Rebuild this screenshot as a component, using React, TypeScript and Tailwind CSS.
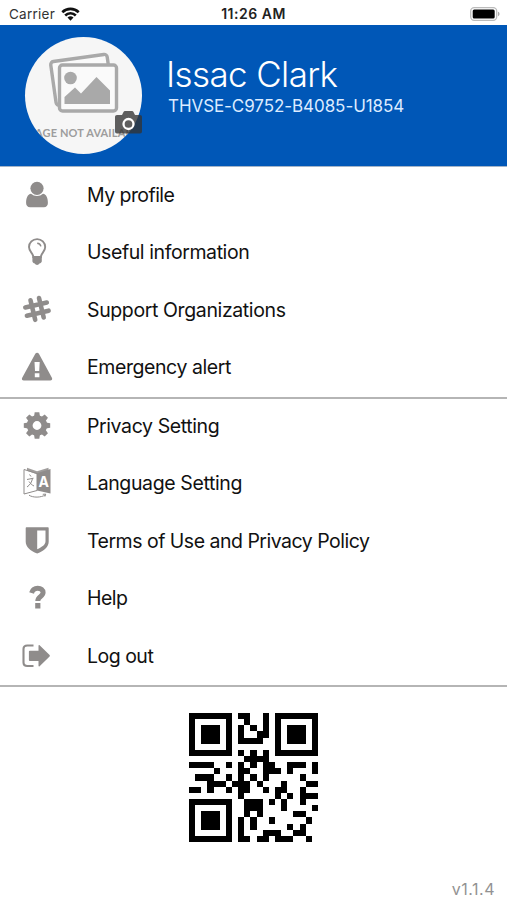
import type { ReactNode } from "react";

const QR_ROWS = [
  "#######.##..#.#######",
  "#.....#..#..#.#.....#",
  "#.###.#.#.#.#.#.###.#",
  "#.###.#.#..##.#.###.#",
  "#.###.#.####..#.###.#",
  "#.....#.......#.....#",
  "#######.#.#.#.#######",
  ".........####........",
  "####..#.#.#.##..###.#",
  "....#...##..###.#...#",
  ".###..#.#.#.#.....#..",
  "...###.###.#...#...##",
  "##.#..#.##..#.##..#..",
  "........#.....#.#.###",
  "#######..###.#.#..#..",
  "#.....#..###...#....#",
  "#.###.#..#.#.....##..",
  "#.###.#.#.#..#.....#.",
  "#.###.#.#.#.....#.#..",
  "#.....#.#...###..##..",
  "#######.##.##.###..#.",
];

function Icon({ children }: { children: ReactNode }) {
  return (
    <svg
      className="size-8 shrink-0 text-[#8f8c8b]"
      fill="currentColor"
      viewBox="0 0 32 32"
    >
      {children}
    </svg>
  );
}

const userIcon = (
  <Icon>
    <circle cx="16" cy="9.3" r="6.6" />
    <path d="M10 14.8a9 9 0 0 0 12 0c3.400.6 4.900 4 4.900 9.200 0 2.600-1.500 4.200-4 4.200H9.100c-2.500 0-4-1.600-4-4.200 0-5.200 1.500-8.600 4.900-9.200Z" />
  </Icon>
);

const bulbIcon = (
  <Icon>
    <path
      d="M12.300 21c0-3.700-4.300-5.300-4.300-10a8.100 7.900 0 0 1 16.200 0c0 4.700-4.300 6.300-4.300 10Z"
      fill="none"
      stroke="currentColor"
      strokeWidth="1.900"
    />
    <path
      d="M16.200 7.200c2 .2 3.300 1.300 3.700 3.200"
      fill="none"
      stroke="currentColor"
      strokeWidth="1.400"
    />
    <path d="M11.400 20.500h9.400v4.700c0 1-1.300 2-2.400 2.400-.6 1.700-4 1.700-4.600 0-1.100-.4-2.400-1.400-2.400-2.400Z" />
  </Icon>
);

const hashIcon = (
  <Icon>
    <g
      fill="none"
      stroke="currentColor"
      strokeLinecap="round"
      strokeWidth="4.600"
    >
      <path d="m9.500 6.300 4.700 19.500M18 4l4.700 19.500M4.300 13.500l21.500-5M5.900 21.700l21.700-5" />
    </g>
  </Icon>
);

const warningIcon = (
  <Icon>
    <path
      clipRule="evenodd"
      d="M14.300 2.800c.8-1.500 2.800-1.500 3.600 0l13 24c.8 1.400-.1 2.700-1.700 2.700H2.800c-1.600 0-2.400-1.300-1.600-2.700ZM13.500 11l.5 9h4.200l.5-9Zm.3 11.300v4h4.600v-4Z"
      fillRule="evenodd"
    />
  </Icon>
);

const gearIcon = (
  <Icon>
    <circle
      cx="16"
      cy="15.500"
      fill="none"
      r="7.300"
      stroke="currentColor"
      strokeWidth="5.800"
    />
    {[0, 45, 90, 135, 180, 225, 270, 315].map((deg) => (
      <path
        d="M13 6.500 13.700 2.300h4.600l.7 4.200Z"
        key={deg}
        transform={`rotate(${deg} 16 15.500)`}
      />
    ))}
  </Icon>
);

const languageIcon = (
  <Icon>
    <path
      d="M3 2.500 16 6.500v17L3 27Z"
      fill="none"
      stroke="currentColor"
      strokeWidth="1"
    />
    <path d="M6 .8 16 4.300 27.500.8v3.500L16 7.300 6 3.800Z" opacity="0.850" />
    <path d="M16 6.200 29.500 2v24.500L16 23.500Z" />
    <path
      d="M8.500 7.500 10 9.500M6 12.500l6.500-1.300M11.500 11.500C10.800 15 9 18 6 20M8 14.500c1.200 1.800 2.800 3.500 5 4.500"
      fill="none"
      stroke="currentColor"
      strokeWidth="1"
    />
    <text
      fill="#fff"
      fontFamily="Inter, sans-serif"
      fontSize="14"
      fontWeight="700"
      textAnchor="middle"
      x="22.800"
      y="20"
    >
      A
    </text>
    <path
      d="M8 28.200c4 2.600 12 2.600 16.500-.4M21.800 27.300l2.900-.2-.8 2.500"
      fill="none"
      stroke="currentColor"
      strokeWidth="1"
    />
  </Icon>
);

const shieldIcon = (
  <Icon>
    <path
      clipRule="evenodd"
      d="M5.700 2.200h21c.6 0 1 .4 1 1v13.600c0 5-4.500 9-11.500 11.800C9.200 25.800 4.700 21.800 4.700 16.800V3.200c0-.6.400-1 1-1ZM16.200 5.500v18.700c4.900-2.200 8.300-4.700 8.300-8V5.500Z"
      fillRule="evenodd"
    />
  </Icon>
);

const helpIcon = (
  <Icon>
    <path
      d="M10.600 11c1-3.600 3.400-4.700 6.100-4.700 3.400 0 5.400 1.600 5.400 4.200 0 4.200-5.300 3.700-5.300 8.500"
      fill="none"
      stroke="currentColor"
      strokeWidth="5"
    />
    <path d="M14.200 21h5.200v5.500h-5.200Z" />
  </Icon>
);

const logoutIcon = (
  <Icon>
    <path
      d="M12.500 5.500H6.300C3.800 5.500 2.500 7 2.500 9v13.500c0 2 1.300 3.500 3.800 3.500h6.200"
      fill="none"
      stroke="currentColor"
      strokeWidth="2.100"
    />
    <path d="M8.800 10.700h8.700V5.700c0-.7.600-.9 1.100-.5l10 9.800c.4.400.4 1 0 1.400l-10 9.800c-.5.400-1.100.2-1.100-.5V20.900H8.800c-.6 0-.9-.3-.9-.9v-8.400c0-.6.300-.9.900-.9Z" />
  </Icon>
);

const mainItems = [
  { label: "My profile", icon: userIcon, tracking: "tracking-[-0.55px]" },
  { label: "Useful information", icon: bulbIcon, tracking: "tracking-[-0.41px]" },
  { label: "Support Organizations", icon: hashIcon, tracking: "tracking-[-0.38px]" },
  { label: "Emergency alert", icon: warningIcon, tracking: "tracking-[-0.42px]" },
];

const settingItems = [
  { label: "Privacy Setting", icon: gearIcon, tracking: "tracking-[-0.4px]" },
  { label: "Language Setting", icon: languageIcon, tracking: "tracking-[-0.38px]" },
  {
    label: "Terms of Use and Privacy Policy",
    icon: shieldIcon,
    tracking: "tracking-[-0.5px]",
  },
  { label: "Help", icon: helpIcon, tracking: "tracking-[-0.5px]" },
  { label: "Log out", icon: logoutIcon, tracking: "tracking-[-0.5px]" },
];

function MenuList({ items }: { items: typeof mainItems }) {
  return (
    <ul>
      {items.map((item) => (
        <li className="flex h-[57.5px] items-center pl-[21px]" key={item.label}>
          {item.icon}
          <span
            className={`ml-[34px] whitespace-nowrap text-[19.5px] leading-6 ${item.tracking}`}
          >
            {item.label}
          </span>
        </li>
      ))}
    </ul>
  );
}

function StatusBar() {
  return (
    <div className="grid h-[25px] grid-cols-3 items-center pl-[9px] pr-[6px] pt-[2px] text-[13.5px] leading-4">
      <div className="flex items-center gap-[6px] text-[#333]">
        <span className="tracking-[0.25px]">Carrier</span>
        <svg className="h-[14px] w-[19px]" viewBox="0 0 19 14">
          <g fill="none" stroke="#111" strokeWidth="2.600">
            <path d="M1.300 5.200a11.800 11.800 0 0 1 16.400 0" />
            <path d="M4.200 8.500a7.500 7.500 0 0 1 10.600 0" />
          </g>
          <path d="m9.500 13.800-3-3.200a4.300 4.300 0 0 1 6 0Z" fill="#111" />
        </svg>
      </div>
      <span className="pr-[3px] text-center text-[14px] font-semibold tracking-[0.5px] text-[#222]">
        11:26 AM
      </span>
      <svg className="h-[14px] w-[31px] justify-self-end" viewBox="0 0 31 14">
        <rect
          fill="#fff"
          height="12.600"
          rx="3.500"
          stroke="#bbb"
          strokeWidth="1.300"
          width="26"
          x="0.700"
          y="0.700"
        />
        <rect height="9" rx="1.500" width="22" x="2.700" y="2.500" />
        <path d="M28 4.800c2 .6 2 3.800 0 4.400Z" fill="#aaa" />
      </svg>
    </div>
  );
}

function Avatar() {
  return (
    <div className="relative size-[117px] shrink-0">
      <div className="size-full overflow-hidden rounded-full bg-[#f6f6f6]">
        <svg className="size-full" viewBox="0 0 117 117">
          <g
            fill="#fafafa"
            stroke="#a9a9a9"
            strokeLinejoin="round"
            strokeWidth="3.400"
          >
            <rect
              height="44"
              rx="3"
              transform="rotate(-8 55 42)"
              width="57"
              x="28"
              y="21"
            />
            <rect height="46" rx="3" width="57" x="34.500" y="28" />
          </g>
          <circle cx="45.500" cy="41" fill="#a9a9a9" r="6.300" />
          <path
            d="M39.500 67V60L50 50.500l6 6L71.500 40 85 53.500V67Z"
            fill="#a9a9a9"
          />
          <text
            className="font-[Lato]"
            fill="#9d9d9d"
            fontSize="11"
            fontWeight="700"
            textAnchor="middle"
            textLength="124"
            x="58"
            y="99.500"
          >
            IMAGE NOT AVAILABLE
          </text>
        </svg>
      </div>
      <svg
        className="absolute left-[90px] top-[74px] h-[23px] w-[27px]"
        viewBox="0 0 27 23"
      >
        <path
          d="M2 4h5l1.500-3C8.800.4 9.300 0 10 0h7c.7 0 1.200.4 1.500 1L20 4h5c1.200 0 2 .8 2 2v14.500c0 1.200-.8 2-2 2H2c-1.200 0-2-.8-2-2V6c0-1.200.8-2 2-2Z"
          fill="#333"
          opacity="0.780"
        />
        <circle
          cx="13.500"
          cy="13"
          fill="none"
          r="5"
          stroke="#fff"
          strokeWidth="2.300"
        />
      </svg>
    </div>
  );
}

function QrCode() {
  return (
    <svg
      className="mx-auto mt-[26px] block size-[129px]"
      shapeRendering="crispEdges"
      viewBox="0 0 21 21"
    >
      {QR_ROWS.map((row, y) =>
        row
          .split("")
          .map((cell, x) =>
            cell === "#" ? (
              <rect height="1" key={`${x}-${y}`} width="1" x={x} y={y} />
            ) : null,
          ),
      )}
    </svg>
  );
}

export default function App() {
  return (
    <div className="flex h-[900px] w-[507px] flex-col overflow-hidden bg-white font-[Inter,sans-serif] text-[#111]">
      <StatusBar />
      <header className="flex h-[142px] border-b border-[#a3b4c8] bg-[#0057b7] pl-[25px] pt-[12.4px] text-white">
        <Avatar />
        <div className="ml-[24px] pt-[15.2px]">
          <h1 className="whitespace-nowrap text-[35px] leading-[42px] font-[350] tracking-[-0.62px]">
            Issac Clark
          </h1>
          <p className="mt-[0.4px] whitespace-nowrap pl-[2px] text-[17px] leading-[22px] tracking-[-0.07px] text-[#dcebff]">
            THVSE-C9752-B4085-U1854
          </p>
        </div>
      </header>
      <nav>
        <div className="flow-root h-[232px] border-b-2 border-[#b5b5b5]">
          <div className="-mt-[1.2px]">
            <MenuList items={mainItems} />
          </div>
        </div>
        <div className="flow-root h-[288px] border-b-2 border-[#b5b5b5]">
          <div className="-mt-[2.1px]">
            <MenuList items={settingItems} />
          </div>
        </div>
      </nav>
      <QrCode />
      <footer className="mt-auto pb-[1px] pr-[12px] text-right text-[16px] leading-5 tracking-[0.5px] text-[#929292]">
        v1.1.4
      </footer>
    </div>
  );
}
